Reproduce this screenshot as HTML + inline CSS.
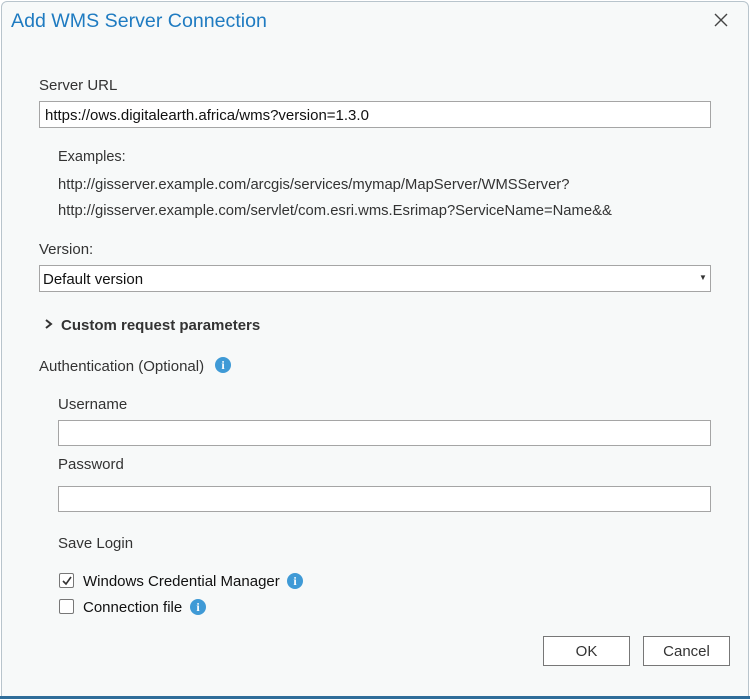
<!DOCTYPE html>
<html><head><style>
html,body{margin:0;padding:0;width:750px;height:699px;overflow:hidden;background:#fff;}
body{font-family:"Liberation Sans",sans-serif;font-size:15px;color:#333;position:relative;}
#dlg{position:absolute;left:1px;top:1px;width:746px;height:694px;background:#f7f9f9;border:1px solid #b8c4cc;border-radius:6px 6px 0 0;}
#bottom{position:absolute;left:0;top:696px;width:750px;height:3px;background:#2f6d9a;}
.a{position:absolute;white-space:nowrap;}
.in{position:absolute;background:#fff;border:1px solid #a5a5a5;box-sizing:border-box;}
.info{position:absolute;width:16px;height:16px;border-radius:50%;background:#3f9ad6;color:#fff;font-weight:bold;font-size:12px;text-align:center;line-height:16px;font-family:"Liberation Serif",serif;}
.cb{position:absolute;width:15px;height:15px;border:1px solid #777;border-radius:2px;background:#fff;box-sizing:border-box;}
.btn{position:absolute;border:1px solid #777;background:#fff;box-sizing:border-box;text-align:center;line-height:30px;font-size:15px;}
</style></head><body>
<div id="dlg"></div>
<div id="bottom"></div>
<div class="a" style="left:11px;top:10px;font-size:19.6px;color:#1f7bc1;">Add WMS Server Connection</div>
<svg class="a" style="left:713px;top:12px" width="16" height="16"><path d="M2 2L14 14M14 2L2 14" stroke="#444" stroke-width="1.4"/></svg>
<div class="a" style="left:39px;top:77px;">Server URL</div>
<div class="in" style="left:39px;top:101px;width:672px;height:27px;"></div>
<div class="a" style="left:45px;top:107px;color:#111;">https://ows.digitalearth.africa/wms?version=1.3.0</div>
<div class="a" style="left:58px;top:149px;font-size:14.5px;">Examples:</div>
<div class="a" style="left:58px;top:177px;font-size:14.8px;">http://gisserver.example.com/arcgis/services/mymap/MapServer/WMSServer?</div>
<div class="a" style="left:58px;top:203px;font-size:14.8px;">http://gisserver.example.com/servlet/com.esri.wms.Esrimap?ServiceName=Name&amp;&amp;</div>
<div class="a" style="left:39px;top:241px;">Version:</div>
<div class="in" style="left:39px;top:265px;width:672px;height:27px;"></div>
<div class="a" style="left:43px;top:271px;color:#111;">Default version</div>
<div class="a" style="left:699px;top:273px;font-size:8px;">&#9660;</div>
<svg class="a" style="left:44px;top:318px" width="10" height="12"><path d="M2 2L7 6L2 10" stroke="#333" stroke-width="2" fill="none"/></svg>
<div class="a" style="left:61px;top:317px;font-weight:bold;">Custom request parameters</div>
<div class="a" style="left:39px;top:358px;">Authentication (Optional)</div>
<div class="info" style="left:215px;top:357px;">i</div>
<div class="a" style="left:58px;top:396px;">Username</div>
<div class="in" style="left:58px;top:420px;width:653px;height:26px;"></div>
<div class="a" style="left:58px;top:456px;">Password</div>
<div class="in" style="left:58px;top:486px;width:653px;height:26px;"></div>
<div class="a" style="left:58px;top:535px;">Save Login</div>
<div class="cb" style="left:59px;top:573px;"></div>
<svg class="a" style="left:61px;top:575px" width="12" height="12"><path d="M2 6L5 9L10 2" stroke="#333" stroke-width="1.6" fill="none"/></svg>
<div class="a" style="left:83px;top:573px;color:#111;">Windows Credential Manager</div>
<div class="info" style="left:287px;top:573px;">i</div>
<div class="cb" style="left:59px;top:599px;"></div>
<div class="a" style="left:83px;top:599px;color:#111;">Connection file</div>
<div class="info" style="left:190px;top:599px;">i</div>
<div class="btn" style="left:543px;top:636px;width:87px;height:30px;">OK</div>
<div class="btn" style="left:643px;top:636px;width:87px;height:30px;">Cancel</div>
</body></html>
